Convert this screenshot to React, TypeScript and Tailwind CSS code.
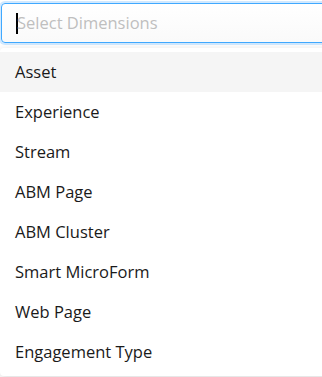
const items = [
  "Asset",
  "Experience",
  "Stream",
  "ABM Page",
  "ABM Cluster",
  "Smart MicroForm",
  "Web Page",
  "Engagement Type",
];

export default function App() {
  return (
    <div
      className="h-[377px] w-[322px] overflow-hidden bg-white pl-[1px] pt-[3px]"
      style={{ fontFamily: '"Open Sans", "Noto Sans", sans-serif' }}
    >
      <div className="flex h-[40px] w-[340px] items-center rounded-[4px] border border-[#40a9ff] bg-gradient-to-b from-white to-[#fafafa] pl-[14px] shadow-[0_0_0_2px_rgba(24,144,255,0.2)]">
        <span className="h-[21px] w-[2px] shrink-0 bg-black" />
        <span className="-ml-[1px] text-[16.5px] text-[#bfbfbf]">Select Dimensions</span>
      </div>
      <div className="-ml-[1px] mt-[5px] w-[340px] rounded-[4px] bg-white py-[4px] shadow-[0_2px_8px_rgba(0,0,0,0.15)]">
        {items.map((label, i) => (
          <div
            key={label}
            className={`flex h-[40px] items-center px-[15px] pt-[1px] text-[16.5px] text-[#1a1a1a] ${
              i === 0 ? "bg-[#f5f5f5]" : ""
            }`}
          >
            {label}
          </div>
        ))}
      </div>
    </div>
  );
}
